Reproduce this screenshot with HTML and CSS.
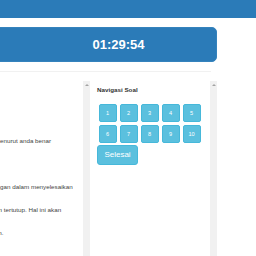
FILE: index.html
```html
<!DOCTYPE html>
<html lang="id">
<head>
  <meta charset="UTF-8">
  <title>Ujian Online</title>
  <link rel="stylesheet" href="styles.css">
</head>

<body>
  <header class="topbar"></header>

  <div class="container">
    <div class="timer">01:29:54</div>
    <div class="divider"></div>

    <section class="exam-row">
      <!-- Petunjuk -->
      <div class="info-panel">
        <p>1. Pilih jawaban yang menurut anda benar</p>
        <p>2. Baca setiap soal.</p>
        <p>3. Berikanlah pertimbangan dalam menyelesaikan</p>
        <p>4. Jangan sampai laman tertutup. Hal ini akan</p>
        <p>5. Teliti kembali jawaban.</p>
      </div>
      <div class="scrollbar"><span class="arrow"></span></div>

      <!-- Navigasi -->
      <div class="nav-panel">
        <h2>Navigasi Soal</h2>
        <div class="nav-grid">
          <button class="btn-soal">1</button>
          <button class="btn-soal">2</button>
          <button class="btn-soal">3</button>
          <button class="btn-soal">4</button>
          <button class="btn-soal">5</button>
          <button class="btn-soal">6</button>
          <button class="btn-soal">7</button>
          <button class="btn-soal">8</button>
          <button class="btn-soal">9</button>
          <button class="btn-soal">10</button>
        </div>
        <button class="btn-selesai">Selesai</button>
      </div>
      <div class="scrollbar"><span class="arrow"></span></div>
    </section>
  </div>
</body>
</html>
```

FILE: styles.css
```css
body {
  font-family: "Liberation Sans", Arial, sans-serif;
  margin: 0;
  background: #fff;
  color: #444;
  overflow: hidden;
}

.topbar {
  height: 18px;
  background-color: #2b7bb8;
}

.container {
  width: 337px;
  margin-left: -120px;
  padding-top: 9px;
}

.timer {
  box-sizing: border-box;
  height: 35px;
  padding-left: 140px;
  background-color: #2b7bb8;
  border: 1px solid #3583bd;
  border-radius: 5px;
  color: white;
  font-size: 13px;
  font-weight: bold;
  line-height: 33px;
  text-align: center;
}

.divider {
  width: 331px;
  height: 1px;
  margin: 9px 0;
  background: #f1f1f1;
}

.exam-row {
  display: flex;
  height: 180px;
}

.info-panel {
  box-sizing: border-box;
  width: 203px;
  padding: 48px 0 0 54px;
  overflow: hidden;
  font-size: 6.25px;
}

.info-panel p {
  margin: 0;
  line-height: 23px;
  white-space: nowrap;
}

.scrollbar {
  width: 7px;
  background: #f1f1f1;
  display: flex;
  justify-content: center;
  padding-top: 3px;
  box-sizing: border-box;
}

.scrollbar .arrow {
  width: 0;
  height: 0;
  border-left: 2px solid transparent;
  border-right: 2px solid transparent;
  border-bottom: 2px solid #a3a3a3;
}

.nav-panel {
  box-sizing: border-box;
  width: 120px;
  padding: 5px 0 0 7px;
}

.nav-panel h2 {
  margin: 0 0 10px;
  font-size: 6.25px;
  line-height: 8px;
  color: #333;
}

.nav-grid {
  display: flex;
  flex-wrap: wrap;
  gap: 3.5px 3px;
  width: 104px;
  padding-left: 1.5px;
}

.btn-soal {
  width: 18px;
  height: 17.5px;
  padding: 0;
  background-color: #5bc0de;
  border: 1px solid #46b8da;
  border-radius: 2px;
  color: white;
  font-family: inherit;
  font-size: 5.6px;
}

.btn-selesai {
  display: block;
  width: 41px;
  height: 20px;
  margin-top: 2px;
  padding: 0;
  background-color: #5bc0de;
  border: 1px solid #46b8da;
  border-radius: 3px;
  color: white;
  font-family: inherit;
  font-size: 8px;
}
```
